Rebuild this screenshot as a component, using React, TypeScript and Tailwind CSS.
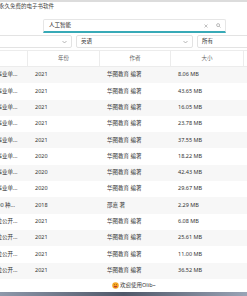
import React from "react";

const rows = [
  { title: "湖北省事业单...", year: "2021", author: "华图教育 编著", size: "8.06 MB" },
  { title: "湖北省事业单...", year: "2021", author: "华图教育 编著", size: "43.65 MB" },
  { title: "湖北省事业单...", year: "2021", author: "华图教育 编著", size: "16.05 MB" },
  { title: "湖北省事业单...", year: "2021", author: "华图教育 编著", size: "23.78 MB" },
  { title: "湖北省事业单...", year: "2021", author: "华图教育 编著", size: "37.55 MB" },
  { title: "湖北省事业单...", year: "2020", author: "华图教育 编著", size: "18.22 MB" },
  { title: "湖北省事业单...", year: "2020", author: "华图教育 编著", size: "42.43 MB" },
  { title: "湖北省事业单...", year: "2020", author: "华图教育 编著", size: "29.67 MB" },
  { title: "行测1000 种...", year: "2018", author: "邵嘉 著", size: "2.29 MB" },
  { title: "事业单位公开...", year: "2021", author: "华图教育 编著", size: "6.08 MB" },
  { title: "事业单位公开...", year: "2021", author: "华图教育 编著", size: "25.61 MB" },
  { title: "事业单位公开...", year: "2021", author: "华图教育 编著", size: "11.00 MB" },
  { title: "事业单位公开...", year: "2021", author: "华图教育 编著", size: "36.52 MB" },
];

const Chevron = () => (
  <svg width="5" height="4" viewBox="0 0 10 6" fill="none" stroke="#9a9a9a" strokeWidth="1.4">
    <path d="M1 1l4 4 4-4" />
  </svg>
);

const Select = ({ label, className }: { label: string; className: string }) => (
  <div
    className={`flex h-[13px] items-center justify-between rounded-[2px] border border-[#e3e3e3] bg-white px-[4px] ${className}`}
  >
    <span className="text-[#333]">{label}</span>
    <Chevron />
  </div>
);

export default function App() {
  return (
    <div
      className="h-[296px] w-[247px] overflow-hidden bg-white text-[5.5px] leading-none text-[#333]"
      style={{ fontFamily: '"Noto Sans", "Noto Sans CJK SC", sans-serif' }}
    >
      <div className="h-[2px] bg-[#dcdcdc]" />
      <div className="-ml-[28px] w-[360px]">
        {/* 标题 */}
        <div className="flex h-[10px] items-center pl-[27px] text-[#444]">永久免费的电子书软件</div>

        {/* 搜索 */}
        <div className="ml-[71px] mt-[7px] flex h-[14px] w-[183px] items-center justify-between rounded-t-[2px] border border-b-2 border-[#e6e6e6] border-b-[#38aab7] pl-[5px] pr-[4px]">
          <span className="text-[#222]">人工智能</span>
          <div className="flex items-center gap-[8px]">
            <svg width="4" height="4" viewBox="0 0 8 8" stroke="#999" strokeWidth="1.2">
              <path d="M1 1l6 6M7 1L1 7" />
            </svg>
            <svg width="5" height="5" viewBox="0 0 10 10" fill="none" stroke="#999" strokeWidth="1.3">
              <circle cx="4.2" cy="4.2" r="3" />
              <path d="M6.5 6.5L9 9" />
            </svg>
          </div>
        </div>

        {/* 筛选 */}
        <div className="mt-[2px] flex gap-[4px] pl-[8px]">
          <Select label="" className="w-[92px]" />
          <Select label="英语" className="w-[117px]" />
          <div className="flex h-[13px] w-[120px] items-center rounded-[2px] border border-[#e3e3e3] px-[4px]">所有</div>
        </div>

        {/* 表格 */}
        <div className="mt-[2px]">
          <div className="grid h-[17px] grid-cols-[55px_72px_71px_73px_80px] border-y border-[#ececec] text-[#666]">
            <div />
            <div className="flex items-center justify-center border-l border-[#ececec]">年份</div>
            <div className="flex items-center justify-center border-l border-[#ececec]">作者</div>
            <div className="flex items-center justify-center border-l border-[#ececec]">大小</div>
            <div className="border-l border-[#ececec]" />
          </div>
          {rows.map((r, i) => (
            <div
              key={i}
              className={`grid h-[16.3px] grid-cols-[55px_72px_71px_73px_80px] items-center ${
                i % 2 === 0 ? "bg-[#f7f7f7]" : "bg-white"
              }`}
            >
              <div className="whitespace-nowrap pl-[8px]">{r.title}</div>
              <div className="px-[8px]">{r.year}</div>
              <div className="px-[8px]">{r.author}</div>
              <div className="px-[8px]">{r.size}</div>
              <div />
            </div>
          ))}
        </div>

        {/* 底部 */}
        <div className="flex h-[13px] items-center pl-[140px]">
          <svg width="7" height="7" viewBox="0 0 14 14">
            <circle cx="7" cy="7" r="6.5" fill="#f5a623" />
            <circle cx="4.8" cy="5.5" r="0.9" fill="#6b3a00" />
            <circle cx="9.2" cy="5.5" r="0.9" fill="#6b3a00" />
            <path d="M3.5 8h7a3.5 3 0 0 1-7 0z" fill="#c0392b" />
          </svg>
          <span className="ml-[1px] text-[#333]">欢迎使用Olib~</span>
        </div>
      </div>
      <div className="h-[4px] bg-gradient-to-r from-[#8e98aa] via-[#505869] to-[#9aa4b6]" />
    </div>
  );
}
